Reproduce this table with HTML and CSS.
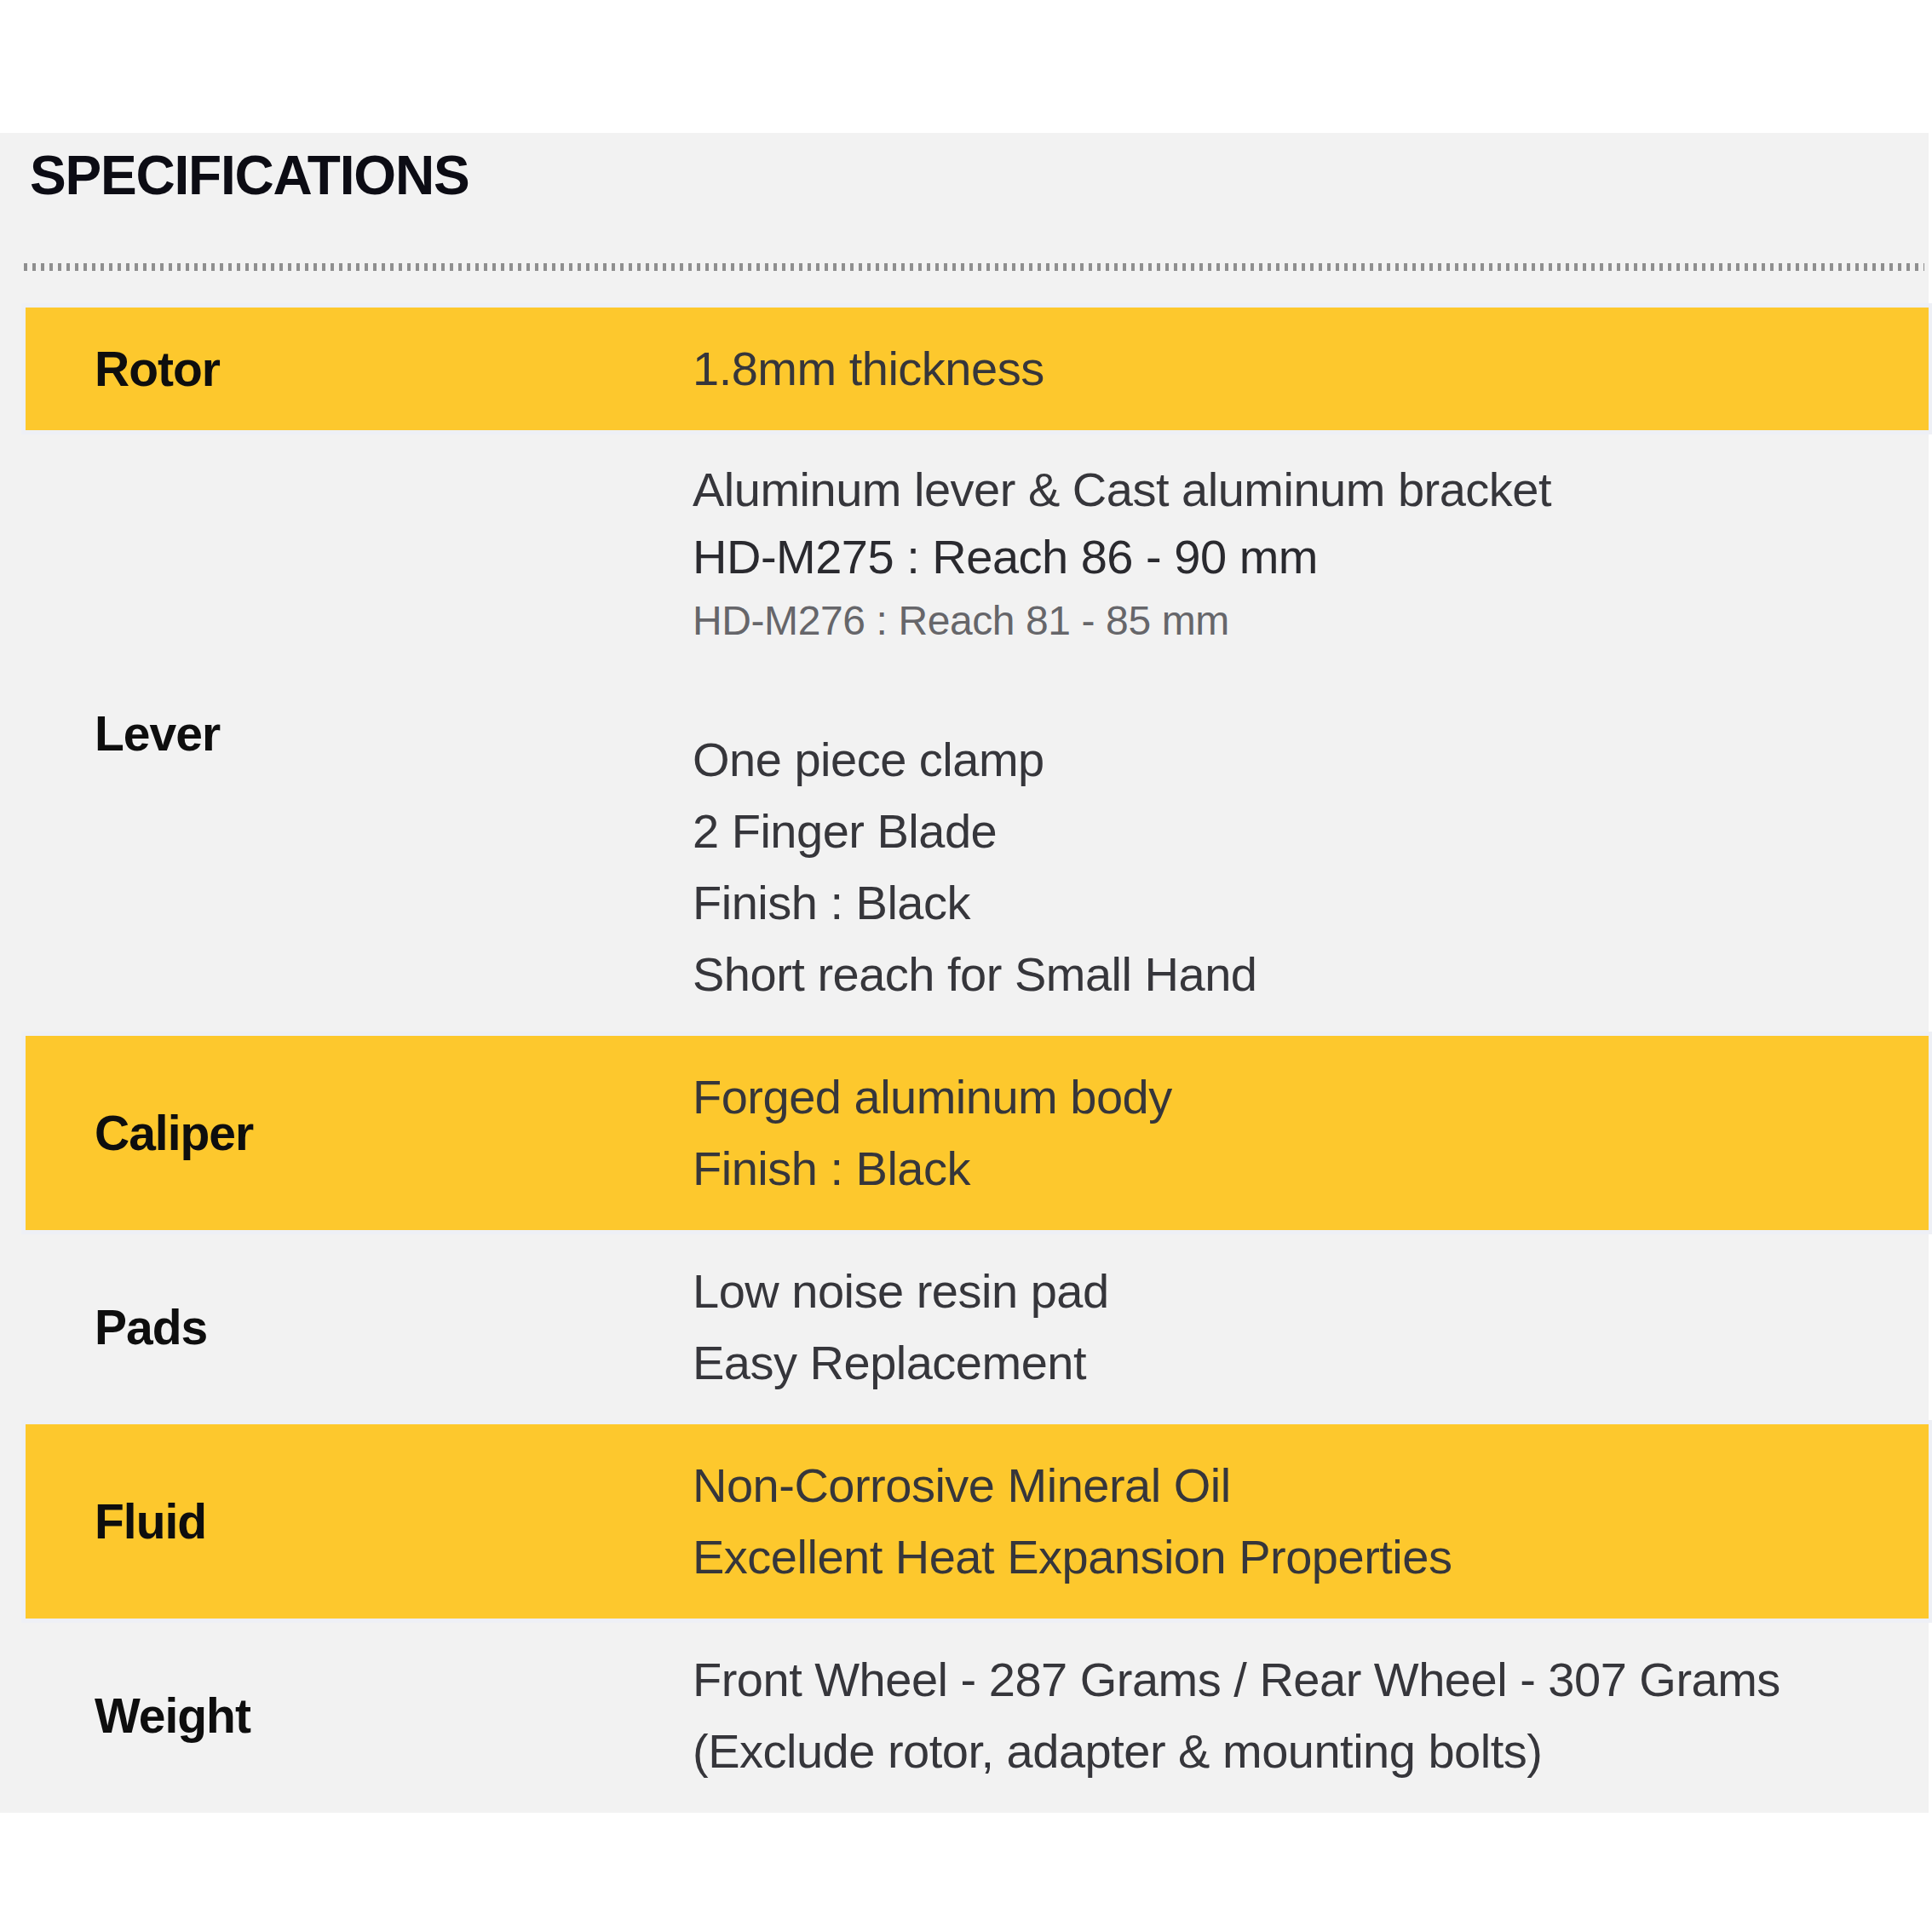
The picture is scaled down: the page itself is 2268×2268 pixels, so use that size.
FILE: index.html
```html
<!DOCTYPE html>
<html lang="en">
<head>
<meta charset="utf-8">
<title>Specifications</title>
<link rel="stylesheet" href="styles.css">
</head>
<body>
<section class="panel">
  <h2 class="title">SPECIFICATIONS</h2>
  <div class="dots"></div>
  <div class="specs">
    <div class="row hl">
      <div class="label">Rotor</div>
      <div class="value"><div class="ln">1.8mm thickness</div></div>
    </div>
    <div class="row">
      <div class="label">Lever</div>
      <div class="value">
        <div class="ln l80">Aluminum lever &amp; Cast aluminum bracket</div>
        <div class="ln l78 dark">HD-M275 : Reach 86 - 90 mm</div>
        <div class="ln small">HD-M276 : Reach 81 - 85 mm</div>
        <div class="blank"></div>
        <div class="ln">One piece clamp</div>
        <div class="ln">2 Finger Blade</div>
        <div class="ln">Finish : Black</div>
        <div class="ln">Short reach for Small Hand</div>
      </div>
    </div>
    <div class="row hl">
      <div class="label">Caliper</div>
      <div class="value">
        <div class="ln">Forged aluminum body</div>
        <div class="ln">Finish : Black</div>
      </div>
    </div>
    <div class="row">
      <div class="label">Pads</div>
      <div class="value">
        <div class="ln">Low noise resin pad</div>
        <div class="ln">Easy Replacement</div>
      </div>
    </div>
    <div class="row hl">
      <div class="label">Fluid</div>
      <div class="value">
        <div class="ln">Non-Corrosive Mineral Oil</div>
        <div class="ln">Excellent Heat Expansion Properties</div>
      </div>
    </div>
    <div class="row">
      <div class="label">Weight</div>
      <div class="value">
        <div class="ln">Front Wheel - 287 Grams / Rear Wheel - 307 Grams</div>
        <div class="ln">(Exclude rotor, adapter &amp; mounting bolts)</div>
      </div>
    </div>
  </div>
</section>
</body>
</html>
```

FILE: styles.css
```css
html, body {
  margin: 0;
  padding: 0;
  background: #ffffff;
}

body {
  font-family: "Liberation Sans", Arial, sans-serif;
  padding-top: 156px;
  padding-bottom: 140px;
}

.panel {
  width: 2264px;
  background: #f2f2f2;
  padding-top: 18px;
  padding-bottom: 0;
}

.title {
  margin: 0 0 0 35px;
  font-size: 64px;
  line-height: 64px;
  font-weight: bold;
  letter-spacing: -1.2px;
  color: #0c0c14;
}

.dots {
  margin: 71px 5px 0 28px;
  height: 9px;
  background: repeating-linear-gradient(to right, #8f8f8f 0, #8f8f8f 4px, transparent 4px, transparent 10px);
}

.specs {
  margin: 43px 0 0 30px;
  display: flex;
  flex-direction: column;
}

.row {
  display: grid;
  grid-template-columns: 783px 1fr;
  align-items: center;
  padding: 30px 0;
}

.row.hl {
  background: #fdc82d;
  box-shadow: 0 0 0 5px #eef0f6;
  position: relative;
}

.label {
  padding-left: 81px;
  font-size: 57px;
  line-height: 84px;
  font-weight: bold;
  letter-spacing: -1px;
  color: #0e0e0e;
}

.value {
  color: #36363b;
  font-size: 56px;
  letter-spacing: -0.5px;
}

.ln {
  line-height: 84px;
  white-space: nowrap;
}

.ln.l80 { line-height: 80px; }
.ln.l78 { line-height: 78px; }
.ln.dark { color: #2a2a2f; }

.ln.small {
  font-size: 48px;
  line-height: 72px;
  letter-spacing: -0.4px;
  color: #66666a;
}

.blank {
  height: 85px;
}
```
